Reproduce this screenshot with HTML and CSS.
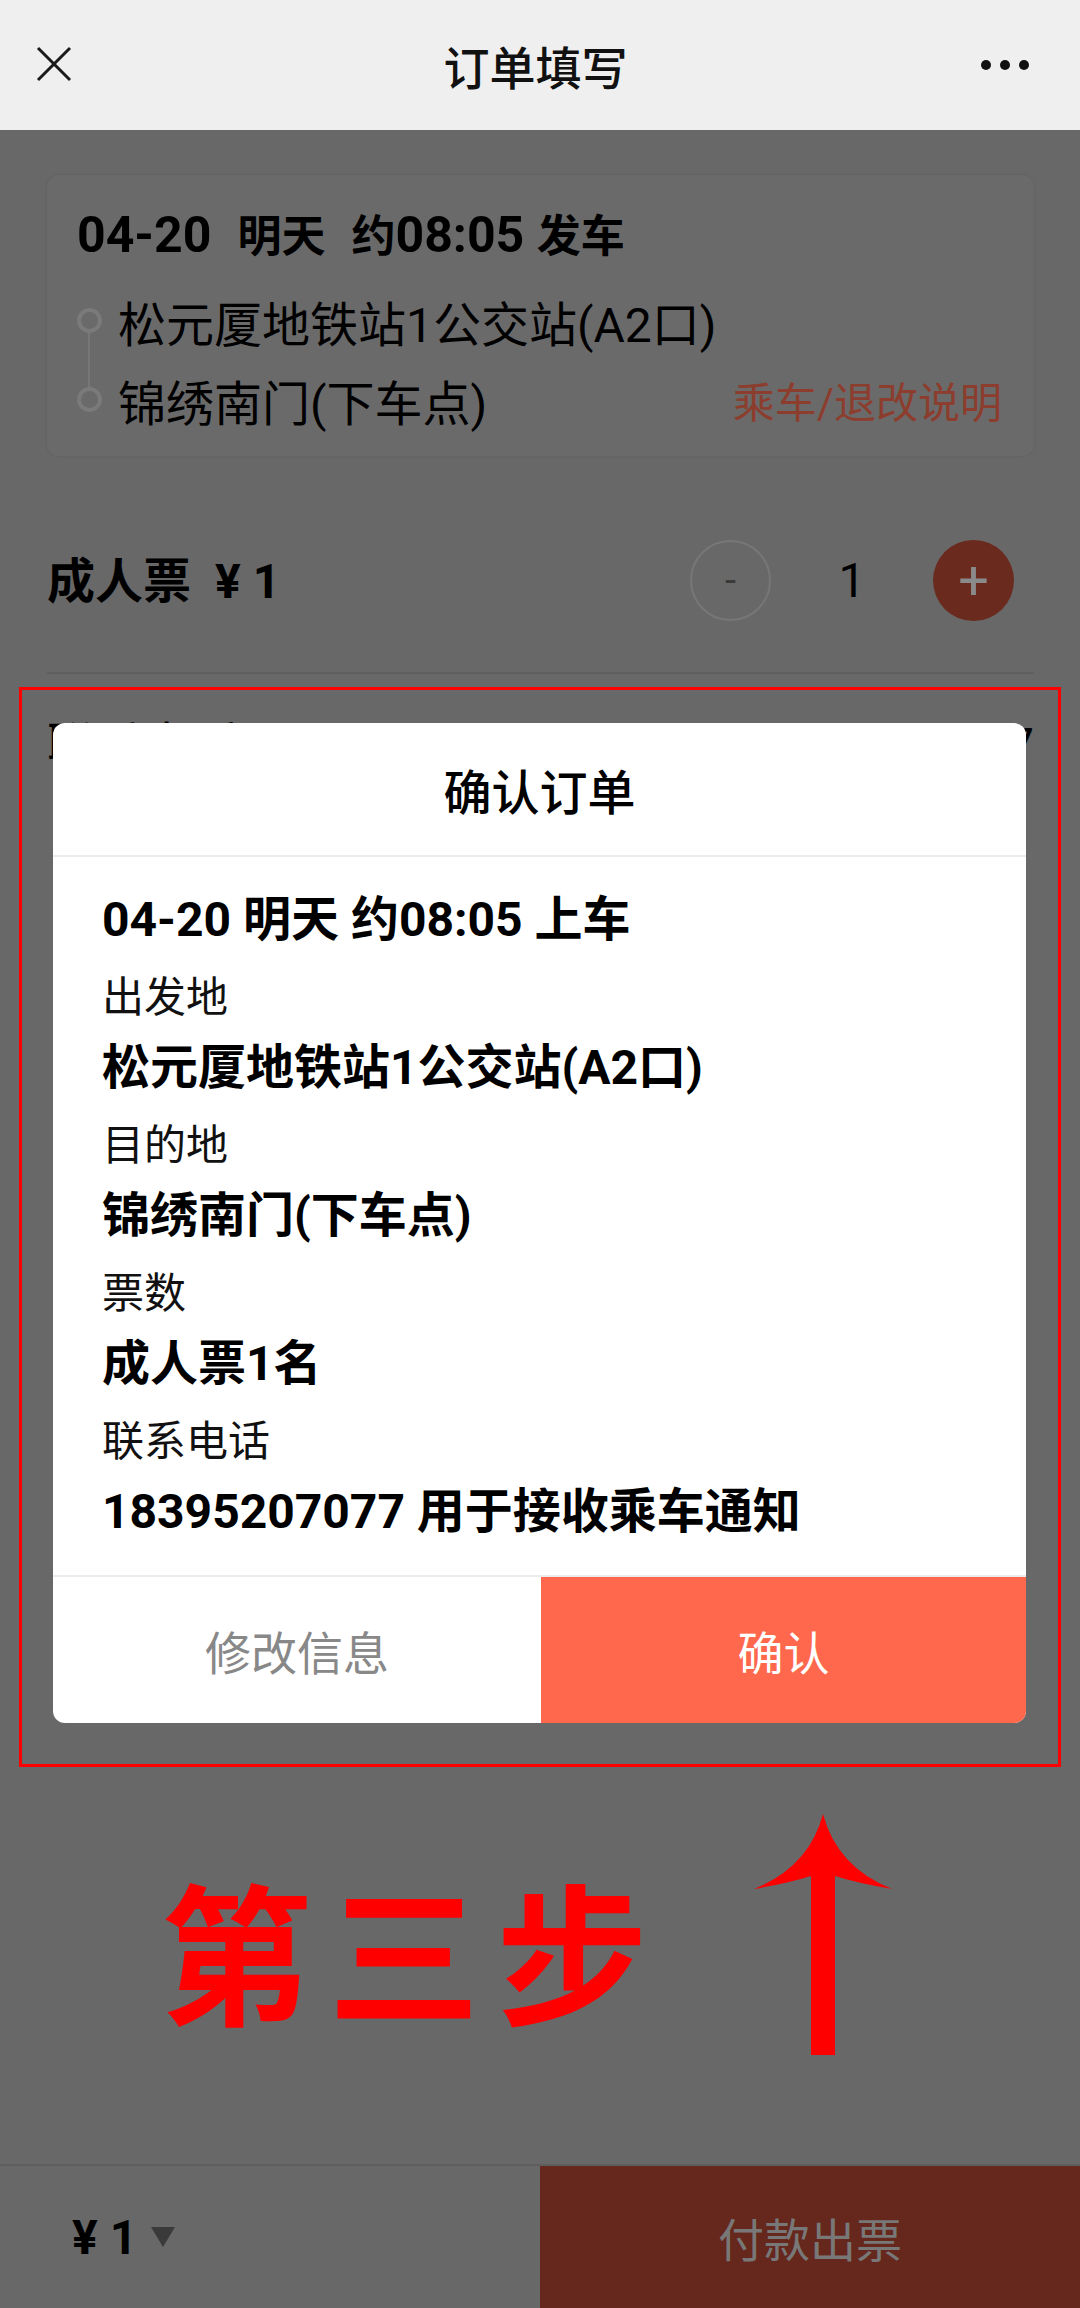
FILE: index.html
```html
<!DOCTYPE html>
<html>
<head>
  <meta charset="utf-8">
  <title>订单填写</title>
  <link rel="stylesheet" href="styles.css">
</head>
<body>
  <div class="navbar">
    <div class="nav-left">
      <svg class="icon-close" viewBox="0 0 36 36">
        <path d="M2 2L34 34M34 2L2 34"/>
      </svg>
    </div>
    <div class="nav-title">订单填写</div>
    <div class="nav-right">
      <span class="dot"></span><span class="dot"></span><span class="dot"></span>
    </div>
  </div>

  <div class="main">
    <div class="trip-card">
      <div class="trip-time">
        <span>04-20</span>
        <span class="cn">明天</span>
        <span><span class="cn">约</span>08:05 <span class="cn">发车</span></span>
      </div>
      <div class="stops">
        <div class="stop"><i class="stop-dot"></i><span>松元厦地铁站1公交站(A2口)</span></div>
        <div class="stop"><i class="stop-dot"></i><span>锦绣南门(下车点)</span><span class="rule-link">乘车/退改说明</span></div>
      </div>
    </div>

    <div class="ticket-row">
      <div class="ticket-name">成人票<span class="ticket-price">¥1</span></div>
      <div class="stepper">
        <span class="step-btn minus">-</span>
        <span class="step-count">1</span>
        <span class="step-btn plus">+</span>
      </div>
    </div>

    <div class="info-row">
      <span>联系电话</span>
      <span>18395207077</span>
    </div>
  </div>

  <div class="footer-bar">
    <div class="total">¥1<span class="caret"></span></div>
    <div class="pay-btn">付款出票</div>
  </div>

  <!-- confirm dialog -->
  <div class="dialog">
    <div class="dialog-title">确认订单</div>
    <div class="dialog-body">
      <div class="dialog-head">04-20 明天 约08:05 上车</div>
      <div class="field-label">出发地</div>
      <div class="field-value">松元厦地铁站1公交站(A2口)</div>
      <div class="field-label">目的地</div>
      <div class="field-value">锦绣南门(下车点)</div>
      <div class="field-label">票数</div>
      <div class="field-value">成人票1名</div>
      <div class="field-label">联系电话</div>
      <div class="field-value">18395207077 用于接收乘车通知</div>
    </div>
    <div class="dialog-actions">
      <div class="btn-edit">修改信息</div>
      <div class="btn-ok">确认</div>
    </div>
  </div>

  <!-- annotation -->
  <div class="mark-box"></div>
  <div class="mark-text">第三步</div>
  <svg class="mark-arrow" viewBox="0 0 160 255">
    <path d="M78 9 Q92 62 147 84 Q112 78 90 71 L90 250 L66 250 L66 71 Q44 78 9 84 Q64 62 78 9 Z"/>
  </svg>
</body>
</html>
```

FILE: styles.css
```css
* {
  margin: 0;
  padding: 0;
  box-sizing: border-box;
}

body {
  width: 1080px;
  height: 2308px;
  overflow: hidden;
  position: relative;
  display: flex;
  flex-direction: column;
  background: #686868;
  color: #000;
  font-family: Roboto, "Noto Sans CJK SC", sans-serif;
}

/* top bar */
.navbar {
  height: 130px;
  flex-shrink: 0;
  background: #efefef;
  display: grid;
  grid-template-columns: 1fr auto 1fr;
  align-items: center;
  padding: 0 51px 0 36px;
}

.icon-close {
  display: block;
  width: 36px;
  height: 36px;
  margin-top: -2px;
}

.icon-close path {
  stroke: #1a1a1a;
  stroke-width: 3;
  fill: none;
}

.nav-title {
  font-size: 46px;
  font-weight: 500;
  color: #111;
  margin-left: 6px;
}

.nav-right {
  display: flex;
  justify-content: flex-end;
  gap: 9px;
}

.dot {
  width: 10px;
  height: 10px;
  border-radius: 50%;
  background: #111;
}

/* page */
.main {
  flex: 1;
  padding: 0 46px 0 47px;
}

.trip-card {
  margin-top: 45px;
  height: 281px;
  padding: 28px 32px 0 30px;
  background: #6a6a6a;
  border-radius: 12px;
  box-shadow: 0 0 3px rgba(0, 0, 0, 0.1);
}

.trip-time {
  display: flex;
  align-items: baseline;
  gap: 26px;
  font-size: 50px;
  font-weight: bold;
  line-height: 64px;
}

.trip-time .cn {
  font-size: 44px;
}

.stops {
  position: relative;
  margin-top: 12px;
}

.stops::before {
  content: '';
  position: absolute;
  left: 11px;
  top: 52px;
  width: 2px;
  height: 54px;
  background: #777;
}

.stop {
  display: flex;
  align-items: center;
  height: 79px;
  font-size: 48px;
}

.stop-dot {
  width: 25px;
  height: 25px;
  border: 4px solid #7a7a7a;
  border-radius: 50%;
  margin-right: 16px;
  flex-shrink: 0;
}

.rule-link {
  margin-left: auto;
  font-size: 42px;
  color: #8c3d2d;
}

.ticket-row {
  margin-top: 84px;
  padding-bottom: 51px;
  border-bottom: 2px solid #5f5f5f;
  display: flex;
  align-items: center;
  justify-content: space-between;
}

.ticket-name {
  font-size: 48px;
  font-weight: bold;
  margin-bottom: 8px;
}

.ticket-price {
  margin-left: 24px;
  letter-spacing: 12px;
}

.stepper {
  display: flex;
  align-items: center;
  margin-right: 20px;
}

.step-btn {
  width: 81px;
  height: 81px;
  border-radius: 50%;
  display: flex;
  align-items: center;
  justify-content: center;
}

.minus {
  border: 2px solid #777;
  color: #3a3a3a;
  font-size: 40px;
}

.plus {
  background: #6b2a1e;
  color: #8a8a8a;
  font-size: 54px;
}

.step-count {
  width: 162px;
  text-align: center;
  font-size: 48px;
}

.info-row {
  padding-top: 32px;
  display: flex;
  justify-content: space-between;
  line-height: 80px;
  font-size: 48px;
}

/* bottom bar */
.footer-bar {
  height: 144px;
  flex-shrink: 0;
  border-top: 2px solid #5e5e5e;
  display: grid;
  grid-template-columns: 540px 1fr;
}

.total {
  display: flex;
  align-items: center;
  padding-left: 72px;
  font-size: 48px;
  font-weight: bold;
  letter-spacing: 12px;
}

.caret {
  width: 0;
  height: 0;
  margin-left: 2px;
  border-left: 12px solid transparent;
  border-right: 12px solid transparent;
  border-top: 20px solid #3a3a3a;
}

.pay-btn {
  background: #66271d;
  color: #787878;
  font-size: 46px;
  display: flex;
  align-items: center;
  justify-content: center;
}

/* dialog */
.dialog {
  position: absolute;
  left: 53px;
  top: 723px;
  width: 973px;
  height: 1000px;
  background: #fff;
  border-radius: 12px;
  overflow: hidden;
  display: flex;
  flex-direction: column;
}

.dialog-title {
  height: 134px;
  flex-shrink: 0;
  border-bottom: 2px solid #ececec;
  display: flex;
  align-items: center;
  justify-content: center;
  font-size: 48px;
  font-weight: 500;
}

.dialog-body {
  padding: 28px 49px 13px;
}

.dialog-head {
  font-size: 48px;
  font-weight: bold;
  line-height: 70px;
  margin-bottom: 15px;
}

.field-label {
  font-size: 42px;
  line-height: 56px;
  color: #111;
}

.field-value {
  font-size: 48px;
  font-weight: bold;
  line-height: 84px;
  margin-bottom: 8px;
}

.dialog-actions {
  flex: 1;
  display: grid;
  grid-template-columns: 488px 1fr;
  border-top: 2px solid #ececec;
  font-size: 46px;
}

.btn-edit,
.btn-ok {
  display: flex;
  align-items: center;
  justify-content: center;
}

.btn-edit {
  color: #888;
}

.btn-ok {
  background: #ff684d;
  color: #fff;
}

/* red annotation over the screenshot */
.mark-box {
  position: absolute;
  left: 19px;
  top: 687px;
  width: 1042px;
  height: 1080px;
  border: 3px solid #f00;
}

.mark-text {
  position: absolute;
  left: 160px;
  top: 1872px;
  font-family: "Noto Sans CJK SC", sans-serif;
  font-size: 152px;
  font-weight: 700;
  line-height: 1;
  letter-spacing: 16px;
  color: #f00;
}

.mark-arrow {
  position: absolute;
  left: 745px;
  top: 1805px;
  width: 160px;
  height: 255px;
}

.mark-arrow path {
  fill: #f00;
}
```
